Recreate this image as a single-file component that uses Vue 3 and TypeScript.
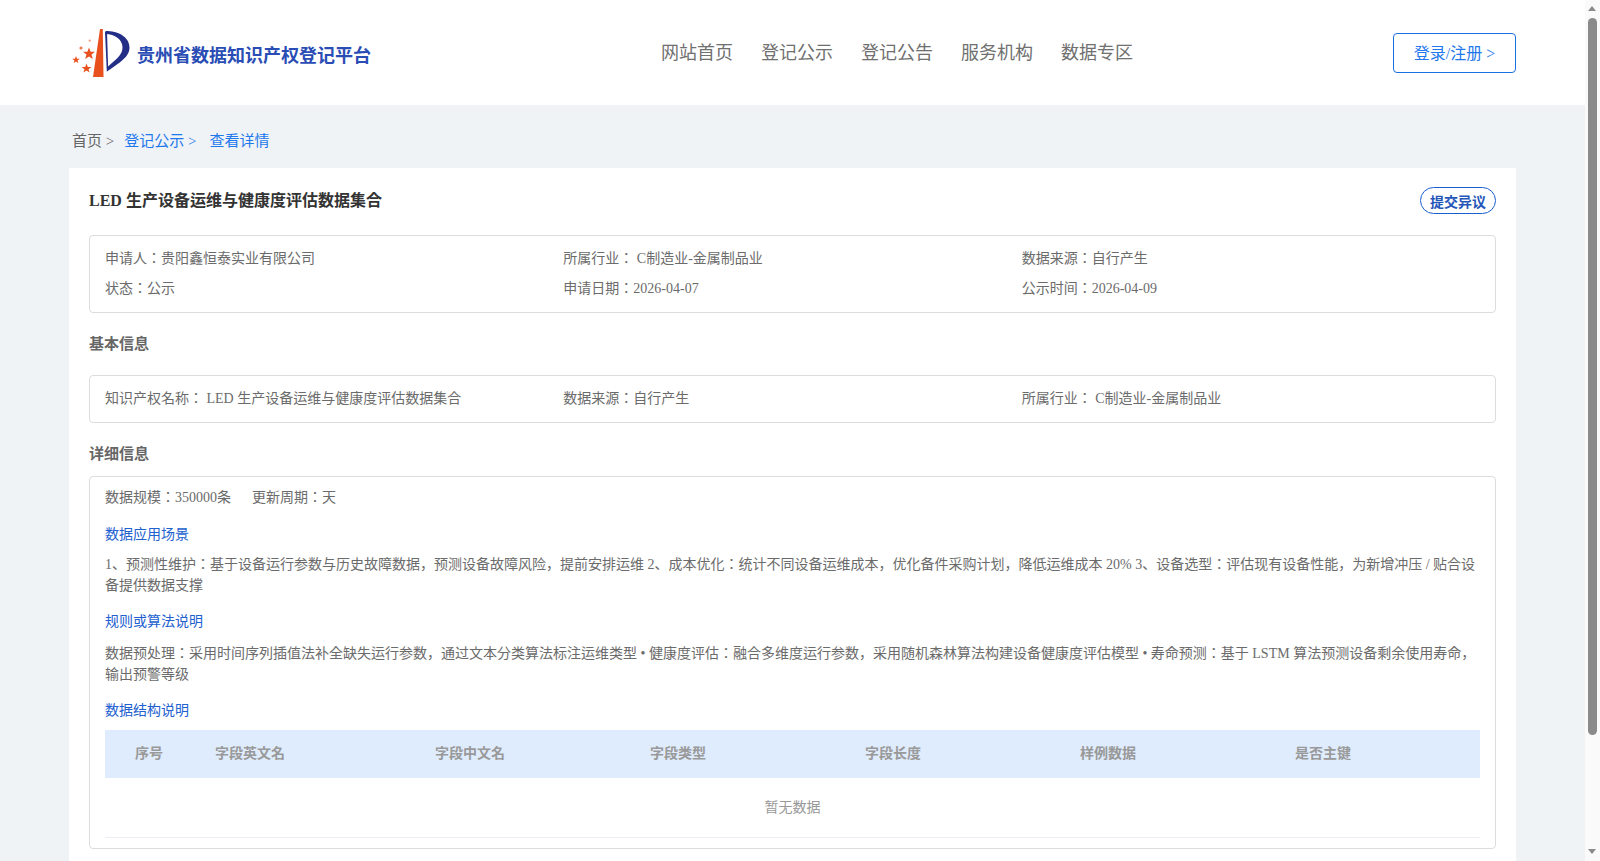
<script setup lang="ts">
const navItems: string[] = ['网站首页', '登记公示', '登记公告', '服务机构', '数据专区']
const summary: string[] = [
  '申请人：贵阳鑫恒泰实业有限公司',
  '所属行业： C制造业-金属制品业',
  '数据来源：自行产生',
  '状态：公示',
  '申请日期：2026-04-07',
  '公示时间：2026-04-09',
]
const basic: string[] = [
  '知识产权名称： LED 生产设备运维与健康度评估数据集合',
  '数据来源：自行产生',
  '所属行业： C制造业-金属制品业',
]
const columns: string[] = ['序号', '字段英文名', '字段中文名', '字段类型', '字段长度', '样例数据', '是否主键']
</script>

<template>
  <div class="shell">
    <div class="page">
      <header class="header">
        <div class="brand">
          <svg class="logo" viewBox="0 0 60 52" width="60" height="52" aria-hidden="true">
            <path d="M21 50 L28 2 L30.8 2 L31.5 50 Z" fill="#e8501e" />
            <path d="M33 5 L35 5 L36.2 43 L34.8 44.5 Z" fill="#232f86" />
            <path d="M33.5 4 C46 4 57 9.5 57.5 20 C58 30 47 36 35 44.5 L35.5 40 C43 33 51 28 50.5 20 C50 12 43 7.5 33.5 7 Z" fill="#232f86" />
            <polygon fill="#e8501e" points="17,20.5 18.6,24.8 23,24.8 19.5,27.6 20.8,32 17,29.4 13.2,32 14.5,27.6 11,24.8 15.4,24.8" />
            <polygon fill="#e8501e" points="4,29 5,31.7 7.8,31.7 5.5,33.4 6.4,36.2 4,34.5 1.6,36.2 2.5,33.4 0.2,31.7 3,31.7" />
            <polygon fill="#e8501e" points="14.5,36.5 15.8,40 19.4,40 16.5,42.2 17.6,45.6 14.5,43.6 11.4,45.6 12.5,42.2 9.6,40 13.2,40" />
            <circle cx="9" cy="21" r="1.6" fill="#ee7a52" />
            <circle cx="17.7" cy="13.7" r="1.1" fill="#f09a7a" />
          </svg>
          <span class="brand-name">贵州省数据知识产权登记平台</span>
        </div>
        <nav class="nav">
          <a v-for="item in navItems" :key="item" class="nav-item">{{ item }}</a>
        </nav>
        <button class="login" type="button">登录/注册 &gt;</button>
      </header>

      <main class="main">
        <div class="crumbs">
          <span class="crumb-home">首页 &gt;</span>
          <span class="crumb-link">登记公示 &gt;</span>
          <span class="crumb-link">查看详情</span>
        </div>

        <section class="card">
          <div class="title-row">
            <h1 class="title">LED 生产设备运维与健康度评估数据集合</h1>
            <button class="objection" type="button">提交异议</button>
          </div>

          <div class="box summary">
            <span v-for="s in summary" :key="s">{{ s }}</span>
          </div>

          <h2 class="section-title basic-title">基本信息</h2>
          <div class="box basic">
            <span v-for="s in basic" :key="s">{{ s }}</span>
          </div>

          <h2 class="section-title detail-title">详细信息</h2>
          <div class="box detail">
            <div class="meta">
              <span>数据规模：350000条</span>
              <span>更新周期：天</span>
            </div>
            <div class="sub">数据应用场景</div>
            <p class="para first">1、预测性维护：基于设备运行参数与历史故障数据，预测设备故障风险，提前安排运维 2、成本优化：统计不同设备运维成本，优化备件采购计划，降低运维成本 20% 3、设备选型：评估现有设备性能，为新增冲压 / 贴合设备提供数据支撑</p>
            <div class="sub">规则或算法说明</div>
            <p class="para">数据预处理：采用时间序列插值法补全缺失运行参数，通过文本分类算法标注运维类型 • 健康度评估：融合多维度运行参数，采用随机森林算法构建设备健康度评估模型 • 寿命预测：基于 LSTM 算法预测设备剩余使用寿命，输出预警等级</p>
            <div class="sub">数据结构说明</div>
            <div class="table-head">
              <span v-for="c in columns" :key="c">{{ c }}</span>
            </div>
            <div class="table-empty">暂无数据</div>
          </div>
        </section>
      </main>
    </div>

    <div class="scrollbar" aria-hidden="true">
      <span class="arrow up"></span>
      <span class="thumb"></span>
      <span class="arrow down"></span>
    </div>
  </div>
</template>

<style>
html, body { margin: 0; height: 100%; overflow: hidden; }
</style>

<style scoped>
.shell {
  display: flex;
  height: 100vh;
  overflow: hidden;
  font-family: "Liberation Serif", "Noto Sans CJK JP", serif;
  color: #666;
  font-size: 14px;
}
.page {
  flex: 1;
  min-width: 0;
  background: #eff3f6;
  overflow: hidden;
}
.header {
  height: 105px;
  background: #fff;
  display: flex;
  align-items: center;
  padding: 0 69px 0 72px;
  position: relative;
}
.brand {
  display: flex;
  align-items: center;
  gap: 5px;
  width: 589px;
}
.logo { flex: none; }
.brand-name {
  font-family: "Liberation Sans", "Noto Sans CJK JP", sans-serif;
  font-size: 18px;
  font-weight: 700;
  color: #2a4db5;
  margin-top: 3px;
}
.nav {
  display: flex;
  gap: 28px;
  flex: 1;
}
.nav-item {
  font-size: 18px;
  color: #707070;
  line-height: 24px;
}
.login {
  width: 123px;
  height: 40px;
  border: 1px solid #1a6fe0;
  border-radius: 4px;
  background: #fff;
  color: #1f78ec;
  font: inherit;
  font-size: 16px;
  padding: 0 0 2px;
}
.main { padding: 0 69px; }
.crumbs {
  height: 63px;
  display: flex;
  align-items: center;
  font-size: 15px;
  padding: 6px 0 0 3px;
  box-sizing: border-box;
  gap: 13px;
  color: #666;
}
.crumb-home { margin-right: -3px; }
.crumb-link { color: #1f78ec; }
.card {
  background: #fff;
  padding: 19px 20px 40px;
}
.title-row {
  display: flex;
  justify-content: space-between;
  align-items: flex-start;
  height: 48px;
}
.title {
  margin: 0;
  font-size: 16px;
  font-weight: 700;
  color: #333;
  line-height: 27px;
}
.objection {
  width: 76px;
  height: 27px;
  border: 1px solid #1a5fd0;
  border-radius: 14px;
  background: #fff;
  color: #2455b8;
  font: inherit;
  font-size: 14px;
  font-weight: 700;
  padding: 0;
}
.box {
  border: 1px solid #ddd;
  border-radius: 4px;
  padding: 8px 15px;
  line-height: 30px;
  color: #6b6b6b;
}
.summary, .basic {
  display: grid;
  grid-template-columns: repeat(3, 1fr);
}
.section-title {
  margin: 0;
  font-size: 15px;
  font-weight: 700;
  color: #666;
  line-height: 24px;
}
.basic-title { margin: 19px 0 19px; }
.basic { padding: 8px 15px; }
.detail-title { margin: 19px 0 10px; }
.detail { padding: 6px 15px 10px; }
.meta { display: flex; gap: 21px; }
.sub {
  color: #2160cf;
  line-height: 21px;
  margin-top: 11px;
}
.para {
  margin: 11px 0 0;
  line-height: 21px;
  color: #6b6b6b;
}
.para.first { margin-top: 9px; }
.para + .sub { margin-top: 15px; }
.table-head {
  margin-top: 9px;
  height: 48px;
  background: #dfecfd;
  display: grid;
  grid-template-columns: 110px 220px repeat(4, 215px) 1fr;
  align-items: center;
  font-weight: 700;
  color: #999;
  line-height: 20px;
}
.table-head span:first-child { padding-left: 30px; }
.table-empty {
  height: 59px;
  border-bottom: 1px solid #ebeef5;
  display: flex;
  align-items: center;
  justify-content: center;
  color: #999;
}
.scrollbar {
  flex: none;
  width: 15px;
  height: 100%;
  background: #fafafa;
  position: relative;
}
.thumb {
  position: absolute;
  top: 18px;
  left: 3px;
  width: 9px;
  height: 717px;
  border-radius: 5px;
  background: #8a8a8a;
}
.arrow {
  position: absolute;
  left: 3px;
  width: 0;
  height: 0;
  border-left: 4.5px solid transparent;
  border-right: 4.5px solid transparent;
}
.arrow.up { top: 6px; border-bottom: 5px solid #8a8a8a; }
.arrow.down { bottom: 7px; border-top: 5px solid #8a8a8a; }
</style>
